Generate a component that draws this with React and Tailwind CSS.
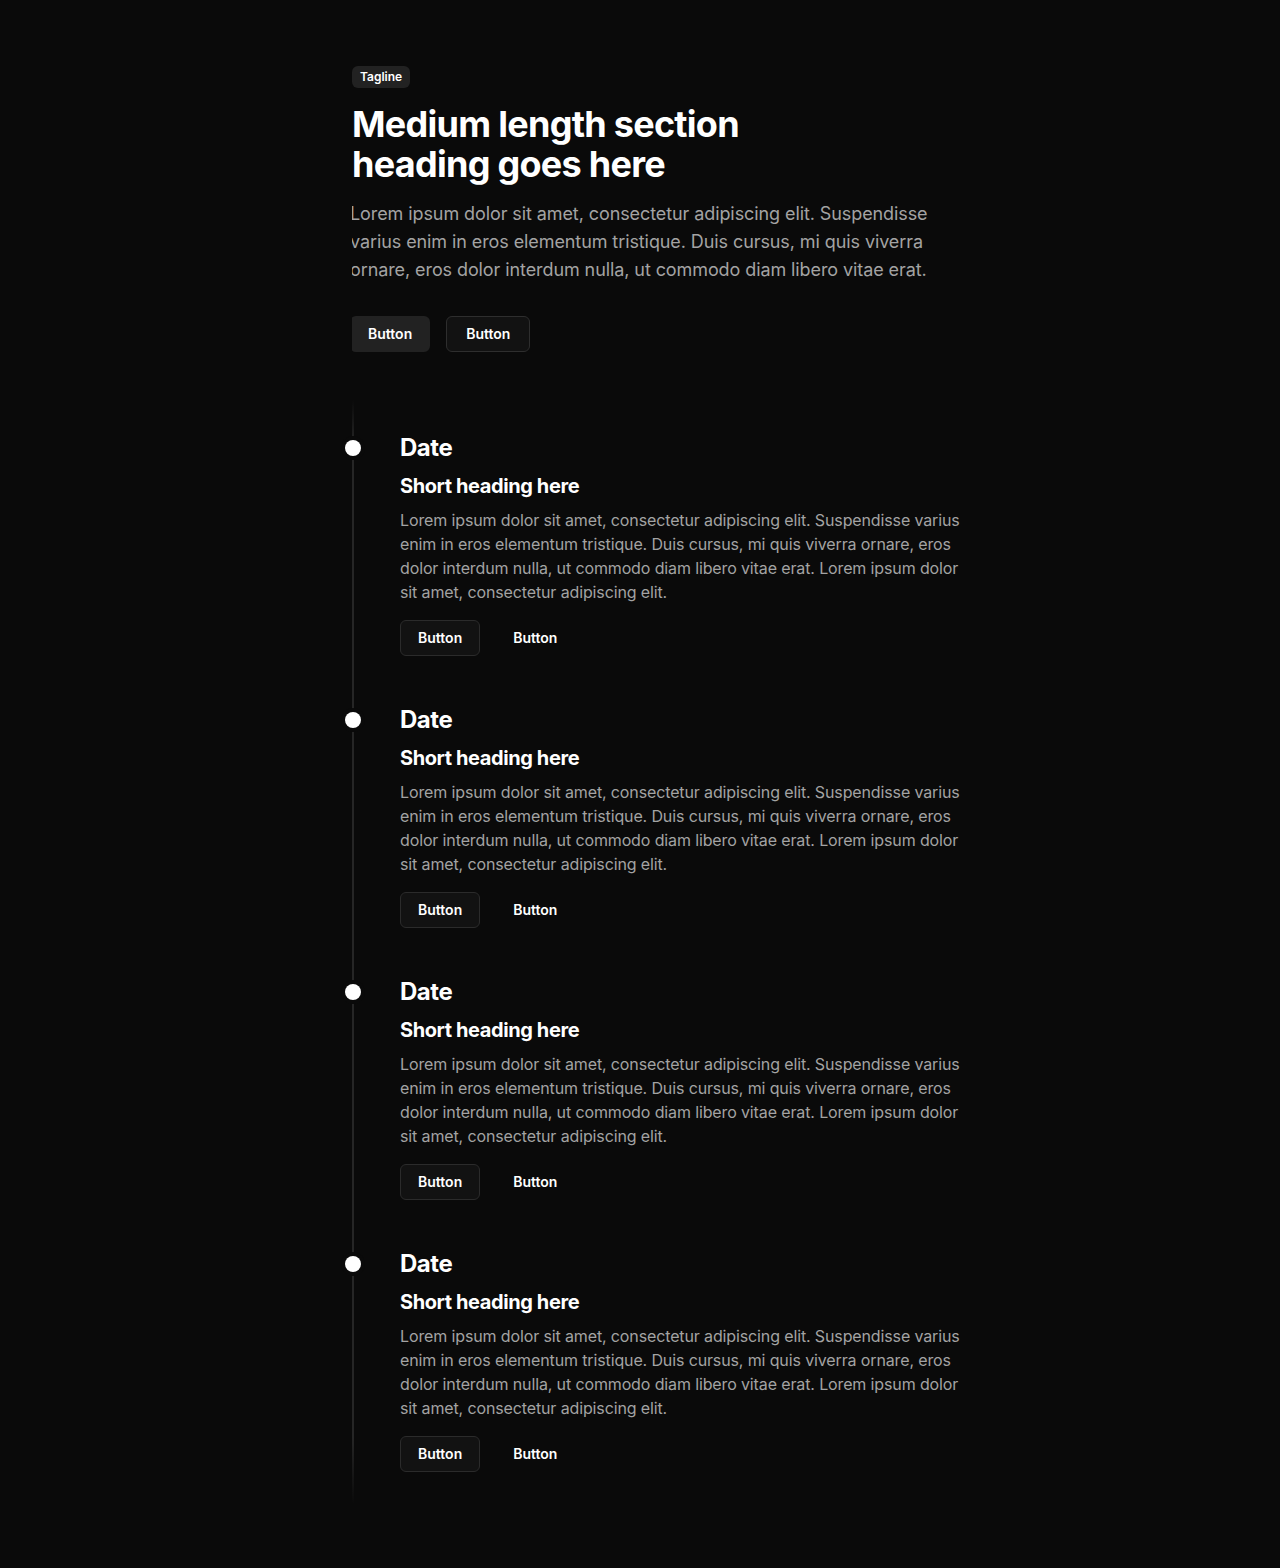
import React from "react";

const font = { fontFamily: "Inter, 'Noto Sans', 'Liberation Sans', sans-serif" };

const lines = [
  "Lorem ipsum dolor sit amet, consectetur adipiscing elit. Suspendisse varius",
  "enim in eros elementum tristique. Duis cursus, mi quis viverra ornare, eros",
  "dolor interdum nulla, ut commodo diam libero vitae erat. Lorem ipsum dolor",
  "sit amet, consectetur adipiscing elit.",
];

const headLines = [
  "Lorem ipsum dolor sit amet, consectetur adipiscing elit. Suspendisse",
  "varius enim in eros elementum tristique. Duis cursus, mi quis viverra",
  "ornare, eros dolor interdum nulla, ut commodo diam libero vitae erat.",
];

function Item() {
  return (
    <div className="relative pl-12">
      <div className="absolute left-[-7px] top-2 h-4 w-4 rounded-full bg-white ring-4 ring-[#0a0a0a]" />
      <div className="text-2xl leading-8 font-bold text-white tracking-[-0.02em]">Date</div>
      <h3 className="mt-2 text-xl leading-7 font-bold text-white tracking-[-0.02em]">Short heading here</h3>
      <p className="mt-2 w-[580px] text-base leading-6 tracking-[-0.008em] text-[#a3a3a3]">
        {lines.map((l, i) => (
          <span key={i} className="block whitespace-nowrap">
            {l}
          </span>
        ))}
      </p>
      <div className="mt-4 flex gap-4">
        <button className="h-9 rounded-md border border-[#2b2b2b] bg-[#121212] px-[17px] text-sm font-semibold text-white">
          Button
        </button>
        <button className="h-9 rounded-md px-[17px] text-sm font-semibold text-white">Button</button>
      </div>
    </div>
  );
}

export default function App() {
  return (
    <div style={font} className="min-h-[1568px] w-full bg-[#0a0a0a] pb-16 pt-[66px] text-white">
      <div className="mx-auto w-[576px]">
        <div className="w-fit rounded-md bg-[#222222] px-2 py-[3px] text-xs leading-4 font-semibold text-white">
          Tagline
        </div>
        <h2 className="mt-4 text-4xl leading-10 font-bold tracking-[-0.02em] text-white">
          Medium length section
          <br />
          heading goes here
        </h2>
        <div className="overflow-hidden">
          <div className="-ml-[2px]">
            <p className="mt-4 text-lg leading-7 tracking-[-0.005em] text-[#a3a3a3]">
              {headLines.map((l, i) => (
                <span key={i} className="block whitespace-nowrap">
                  {l}
                </span>
              ))}
            </p>
            <div className="mt-8 flex gap-4">
              <button className="h-9 rounded-md bg-[#222222] px-[18px] text-sm font-semibold text-white">Button</button>
              <button className="h-9 rounded-md border border-[#2e2e2e] bg-[#121212] px-[19px] text-sm font-semibold text-white">
                Button
              </button>
            </div>
          </div>
        </div>

        <div className="relative mt-12 py-8">
          <div className="absolute bottom-0 left-0 top-0 w-[2px] bg-[linear-gradient(to_bottom,transparent,#262626_4%,#262626_94%,transparent)]" />
          <div className="flex flex-col gap-12">
            <Item />
            <Item />
            <Item />
            <Item />
          </div>
        </div>
      </div>
    </div>
  );
}
